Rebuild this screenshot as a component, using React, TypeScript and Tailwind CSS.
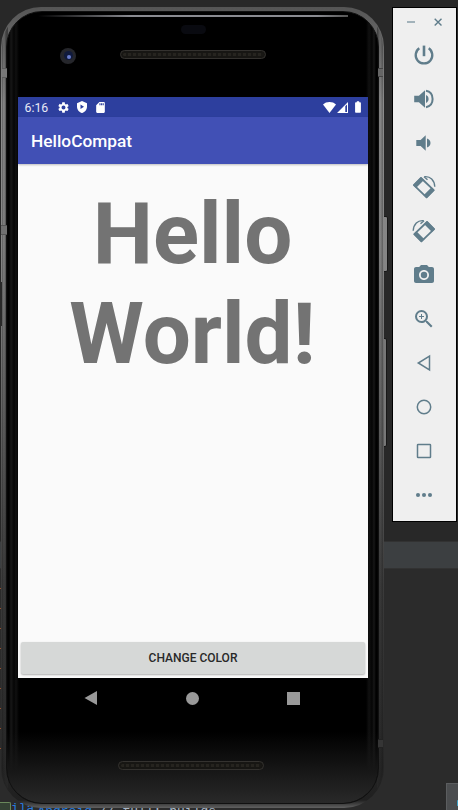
import React from "react";
import { MdSettings, MdSdCard, MdBatteryFull, MdPhotoCamera, MdZoomIn } from "react-icons/md";

function Svg({ size = 24, children }: { size?: number; children: React.ReactNode }) {
  return (
    <svg width={size} height={size} viewBox="0 0 24 24" fill="currentColor">
      {children}
    </svg>
  );
}

function RotateIcon({ flip = false }: { flip?: boolean }) {
  return (
    <svg width="24" height="24" viewBox="0 0 24 24" className={flip ? "-scale-x-100" : ""}>
      <path d="M9 3 21.700 15.200 14.600 22.300 1.900 10.100Z" fill="none" stroke="currentColor" strokeWidth="1.800" strokeLinejoin="round" />
      <path d="M9 2 12 4.900 4 13 1 10.100ZM19.600 12.300 22.600 15.200 14.600 23.200 11.600 20.300Z" fill="currentColor" />
      <path d="M12.300 1.700C18.300.900 22.500 5.300 22.800 11.800M12 1.800l3.500 2.900" fill="none" stroke="currentColor" strokeWidth="1.400" />
    </svg>
  );
}

const tools = [
  <Svg>
    <path d="M12 2.600v10.600" fill="none" stroke="currentColor" strokeWidth="2.600" />
    <path d="M7.300 5.300a8.300 8.300 0 1 0 9.400 0" fill="none" stroke="currentColor" strokeWidth="2.300" />
  </Svg>,
  <Svg>
    <path d="M2.200 8.800h4.700L13 3.300v17.400l-6.100-5.500H2.200z" />
    <path d="M14 8.100c1.700.8 2.600 2.100 2.600 3.900s-.9 3.100-2.600 3.900z" />
    <path d="M14 3.800c4.200.8 6.600 4 6.600 8.200s-2.400 7.400-6.600 8.200" fill="none" stroke="currentColor" strokeWidth="2" />
  </Svg>,
  <Svg>
    <path d="M4.300 8.900h4.300l5.100-4.700v15.600l-5.100-4.700H4.300zM15 7.600c2.300.8 3.500 2.300 3.500 4.400s-1.200 3.600-3.500 4.400z" />
  </Svg>,
  <RotateIcon />,
  <RotateIcon flip />,
  <MdPhotoCamera size={24} />,
  <MdZoomIn size={24} />,
  <Svg>
    <path d="M17.500 5.200v13.600L6.300 12z" fill="none" stroke="currentColor" strokeWidth="1.500" />
  </Svg>,
  <Svg>
    <circle cx="12" cy="12" r="6.700" fill="none" stroke="currentColor" strokeWidth="1.500" />
  </Svg>,
  <Svg>
    <rect x="5.500" y="5.500" width="13" height="13" rx=".6" fill="none" stroke="currentColor" strokeWidth="1.500" />
  </Svg>,
  <Svg>
    <circle cx="6" cy="12" r="2.050" />
    <circle cx="12" cy="12" r="2.050" />
    <circle cx="18" cy="12" r="2.050" />
  </Svg>,
];

function Toolbar() {
  return (
    <aside className="absolute left-[392px] top-[7px] flex h-[515px] w-[65px] flex-col border border-black bg-[#efefef] text-[#607d8b]">
      <div className="flex h-[25px] items-center justify-between pl-[13px] pr-[13px] pt-[3px]">
        <svg width="10" height="10" viewBox="0 0 10 10"><path d="M1 5h8" stroke="#8fa3ad" strokeWidth="1.600" /></svg>
        <svg width="10" height="10" viewBox="0 0 10 10"><path d="M1.700 1.700l6.800 6.800M8.500 1.700 1.700 8.500" stroke="currentColor" strokeWidth="1.400" /></svg>
      </div>
      {tools.map((icon, i) => (
        <div key={i} className="flex h-11 items-center justify-center pr-[1px]">{icon}</div>
      ))}
    </aside>
  );
}

function Grille() {
  return (
    <div className="h-[9px] w-[146px] rounded-full border border-[#34322f] bg-[#171613] p-[2px]">
      <div className="h-full rounded-full bg-[repeating-linear-gradient(90deg,#26241f_0px,#26241f_3px,#191815_3px,#191815_5px)]" />
    </div>
  );
}

function Screen() {
  return (
    <section className="flex h-[581px] w-[350px] flex-col bg-[#fafafa]">
      <div className="flex h-5 shrink-0 items-center bg-[#2d3f9e] text-white">
        <span className="ml-[7px] w-[32px] pt-px text-[12.300px] leading-5 text-[#e8eaf6]">6:16</span>
        <MdSettings size={13} />
        <svg className="ml-[6px]" width="12" height="12" viewBox="0 0 24 24" fill="currentColor">
          <path fillRule="evenodd" d="M12 0 2 4.300v7.200C2 17.200 6.200 22.500 12 24c5.800-1.500 10-6.800 10-12.500V4.300zM9 7v9l7-4.500z" />
        </svg>
        <MdSdCard className="ml-[6px]" size={13} />
        <div className="ml-auto mr-[3px] flex items-center">
          <svg width="13" height="11" viewBox="0 0 13 11" fill="currentColor"><path d="M0 2.600C1.700.800 4 0 6.500 0S11.300.800 13 2.600L6.500 11z" /></svg>
          <svg className="ml-px" width="11" height="11" viewBox="0 0 11 11" fill="currentColor">
            <path fillRule="evenodd" d="M11 0v11H0zM8.300 4.200v5.800h1.700V2.500z" />
          </svg>
          <MdBatteryFull className="ml-[3px]" size={14} />
        </div>
      </div>
      <header className="z-10 flex h-[47px] shrink-0 items-center bg-[#4150b5] pl-[13.500px] pt-[2px] text-[17.300px] font-medium text-white shadow-[0_1px_2px_rgba(0,0,0,0.25)]">
        HelloCompat
      </header>
      <main className="flex flex-1 flex-col justify-between">
        <h1 className="pt-[20px] text-center text-[85.300px] font-bold leading-[100px] text-[#737373]">
          Hello<br />World!
        </h1>
        <button className="mb-[4px] ml-[3px] mr-[3px] h-[32px] rounded-[2px] bg-[#d6d8d7] pl-px text-[12px] font-medium text-[#292929] shadow-[0_1px_2px_rgba(0,0,0,0.3)]">
          CHANGE COLOR
        </button>
      </main>
    </section>
  );
}

function Phone() {
  return (
    <div className="absolute left-[1px] top-[7px] h-[801px] w-[383px] rounded-[40px] bg-[linear-gradient(180deg,#555_0%,#8c8c8c_12%,#858585_30%,#646464_50%,#3b3b3b_72%,#2b2b2b_90%,#202020_99%,#606060_100%)] p-px">
      <div className="h-full rounded-[39px] bg-[linear-gradient(90deg,#11111155_0px,#11111100_2px,#29292999_4px,#292929aa_6px,#00000000_6px,#00000000_375px,#292929aa_375px,#11111100_378px,#11111155_381px)] px-[4px] pb-[3px] pt-[3px]">
        <div className="h-full overflow-hidden rounded-[36px] border border-[#101010] bg-[linear-gradient(90deg,#050505_0px,#000_2px,#171717_4px,#050505_7px,#101010_9px,#000_12px,#000_359px,#101010_362px,#050505_365px,#171717_367px,#000_369px,#050505_371px)]">
          <div className="flex h-full flex-col items-center bg-[linear-gradient(180deg,#0000_91%,#171717_96%,#292929_100%)]">
            <div className="mt-[3px] h-[1.500px] w-[310px] shrink-0 bg-[linear-gradient(90deg,#0000,#8a8b91_30%,#8a8b91_90%,#555)]" />
            <div className="flex h-[80.500px] w-full shrink-0 items-start">
              <div className="ml-[53px] mt-[31px] flex size-4 items-center justify-center rounded-full bg-[#25262b]">
                <div className="flex size-[9px] items-center justify-center rounded-full bg-[#101a3c]">
                  <div className="size-[4px] translate-x-px translate-y-px rounded-full bg-[#687bcc]" />
                </div>
              </div>
              <div className="ml-[44px] flex w-[146px] flex-col items-center pt-[8.500px]">
                <div className="h-[9px] w-[25px] rounded-full bg-[#090a10]" />
                <div className="mt-[16px]"><Grille /></div>
              </div>
            </div>
            <Screen />
            <nav className="flex h-[40px] w-full shrink-0 items-center justify-center gap-[88px] pr-[1px] text-[#999]">
              <svg width="14" height="14" viewBox="0 0 14 14"><path d="M13 0v14L.5 7z" fill="currentColor" /></svg>
              <span className="size-[13px] rounded-full bg-[#999]" />
              <span className="size-[13px] bg-[#999]" />
            </nav>
            <div className="mr-[4px] mt-[43px]"><Grille /></div>
          </div>
        </div>
      </div>
    </div>
  );
}

export default function App() {
  return (
    <div className="relative h-[810px] w-[458px] overflow-hidden bg-[#282828] font-[Roboto,sans-serif]">
      <div className="flex h-full flex-col">
        <div className="h-[541px]" />
        <div className="h-[28px] border-y border-[#323232] bg-[#3c3f41]" />
        <div className="flex-1 bg-[#2b2b2b]" />
      </div>
      <div className="absolute left-0 top-[588px] flex flex-col gap-[19px]">
        {[0, 1, 2, 3, 4, 5, 6, 7, 8].map((n) => <i key={n} className="h-px w-[2px] bg-[#96512e]" />)}
      </div>
      <div className="absolute left-0 top-[802px] flex whitespace-pre font-['Liberation_Mono',monospace] text-[13px] leading-[14px]">
        <span className="h-[12px] w-[11px] rounded-tr-[2px] border-r border-t border-[#69885b] bg-[#344134]" />
        <span className="text-[#287bde]">ila</span>
        <span className="ml-[3px] pt-[3px] text-[#287bde]">Android</span>
        <span className="ml-[7px] pt-[3px] text-[#a9b7c6]">// full: builds</span>
      </div>
      <div className="absolute left-[446px] top-[783px] flex h-[27px] w-[12px] items-center justify-end border-l border-t border-[#5b5d5f] bg-[#4b4d4f]">
        <span className="mt-[12px] h-[6px] w-px rounded bg-[#3ba0c5]" />
      </div>
      <div className="absolute left-[383px] top-[216px] h-[56px] w-[5px] rounded-r-[2px] border border-[#171717] bg-[#858585]" />
      <div className="absolute left-[382px] top-[338px] h-[109px] w-[5px] rounded-r-[2px] border border-[#171717] bg-[#777]" />
      <Phone />
      <i className="absolute left-[2px] top-[68px] h-[10px] w-[5px] border-y border-[#5b5b5b] bg-[#777]" />
      <i className="absolute left-[378px] top-[68px] h-[9px] w-[5px] border-y border-[#444] bg-[#666]" />
      <i className="absolute left-[1px] top-[225px] h-[10px] w-[6px] border-y border-[#555] bg-[#707070]" />
      <i className="absolute left-0 top-[282px] h-[44px] w-[2px] bg-[#292929]" />
      <i className="absolute left-[378px] top-[739px] h-[9px] w-[5px] border-y border-[#222] bg-[#353535]" />
      <Toolbar />
    </div>
  );
}
